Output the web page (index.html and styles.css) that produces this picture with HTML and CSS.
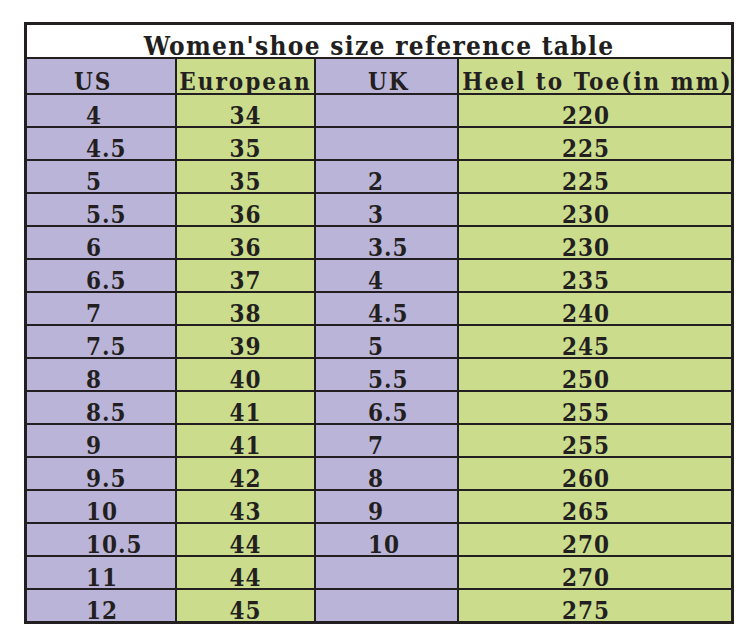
FILE: index.html
```html
<!DOCTYPE html>
<html>
<head>
<meta charset="utf-8">
<link rel="stylesheet" href="styles.css">
</head>
<body>
<div class="sheet">
  <div class="title">Women'shoe size reference table</div>
  <div class="cell p c1 hd hd1">US</div>
  <div class="cell g c2 hd">European</div>
  <div class="cell p c3 hd">UK</div>
  <div class="cell g c4 hd">Heel to Toe(in mm)</div>

  <div class="cell p c1">4</div><div class="cell g c2">34</div><div class="cell p c3"></div><div class="cell g c4">220</div>
  <div class="cell p c1">4.5</div><div class="cell g c2">35</div><div class="cell p c3"></div><div class="cell g c4">225</div>
  <div class="cell p c1">5</div><div class="cell g c2">35</div><div class="cell p c3">2</div><div class="cell g c4">225</div>
  <div class="cell p c1">5.5</div><div class="cell g c2">36</div><div class="cell p c3">3</div><div class="cell g c4">230</div>
  <div class="cell p c1">6</div><div class="cell g c2">36</div><div class="cell p c3">3.5</div><div class="cell g c4">230</div>
  <div class="cell p c1">6.5</div><div class="cell g c2">37</div><div class="cell p c3">4</div><div class="cell g c4">235</div>
  <div class="cell p c1">7</div><div class="cell g c2">38</div><div class="cell p c3">4.5</div><div class="cell g c4">240</div>
  <div class="cell p c1">7.5</div><div class="cell g c2">39</div><div class="cell p c3">5</div><div class="cell g c4">245</div>
  <div class="cell p c1">8</div><div class="cell g c2">40</div><div class="cell p c3">5.5</div><div class="cell g c4">250</div>
  <div class="cell p c1">8.5</div><div class="cell g c2">41</div><div class="cell p c3">6.5</div><div class="cell g c4">255</div>
  <div class="cell p c1">9</div><div class="cell g c2">41</div><div class="cell p c3">7</div><div class="cell g c4">255</div>
  <div class="cell p c1">9.5</div><div class="cell g c2">42</div><div class="cell p c3">8</div><div class="cell g c4">260</div>
  <div class="cell p c1">10</div><div class="cell g c2">43</div><div class="cell p c3">9</div><div class="cell g c4">265</div>
  <div class="cell p c1">10.5</div><div class="cell g c2">44</div><div class="cell p c3">10</div><div class="cell g c4">270</div>
  <div class="cell p c1">11</div><div class="cell g c2">44</div><div class="cell p c3"></div><div class="cell g c4">270</div>
  <div class="cell p c1">12</div><div class="cell g c2">45</div><div class="cell p c3"></div><div class="cell g c4">275</div>
</div>
</body>
</html>
```
FILE: styles.css
```css
html, body {
  margin: 0;
  background: #ffffff;
}
body {
  padding: 22px 0 0 24px;
  font-family: "DejaVu Serif Condensed", "DejaVu Serif", serif;
  font-stretch: condensed;
  font-weight: bold;
  color: #231f20;
}
.sheet {
  display: grid;
  width: max-content;
  grid-template-columns: 148px 137px 141px 272px;
  grid-template-rows: 32px 34px repeat(16, 31px);
  gap: 2px;
  padding: 3px;
  background: #231f20;
}
.title {
  grid-column: 1 / 5;
  background: #ffffff;
  display: flex;
  align-items: flex-end;
  justify-content: center;
  font-size: 26px;
  line-height: 22px;
  letter-spacing: 1.3px;
}
.cell {
  display: flex;
  align-items: flex-end;
  font-size: 24px;
  line-height: 21px;
  letter-spacing: 1px;
  white-space: nowrap;
}
.p { background: #bab4d9; }
.g { background: #cbdc8d; }
.c1 { padding-left: 59px; }
.c2 { justify-content: center; }
.c3 { padding-left: 52px; }
.c4 { justify-content: center; padding-right: 18px; }
.hd { line-height: 22px; letter-spacing: 2px; }
.hd1 { padding-left: 47px; }
.c4.hd { padding-right: 0; padding-left: 5px; }
```
